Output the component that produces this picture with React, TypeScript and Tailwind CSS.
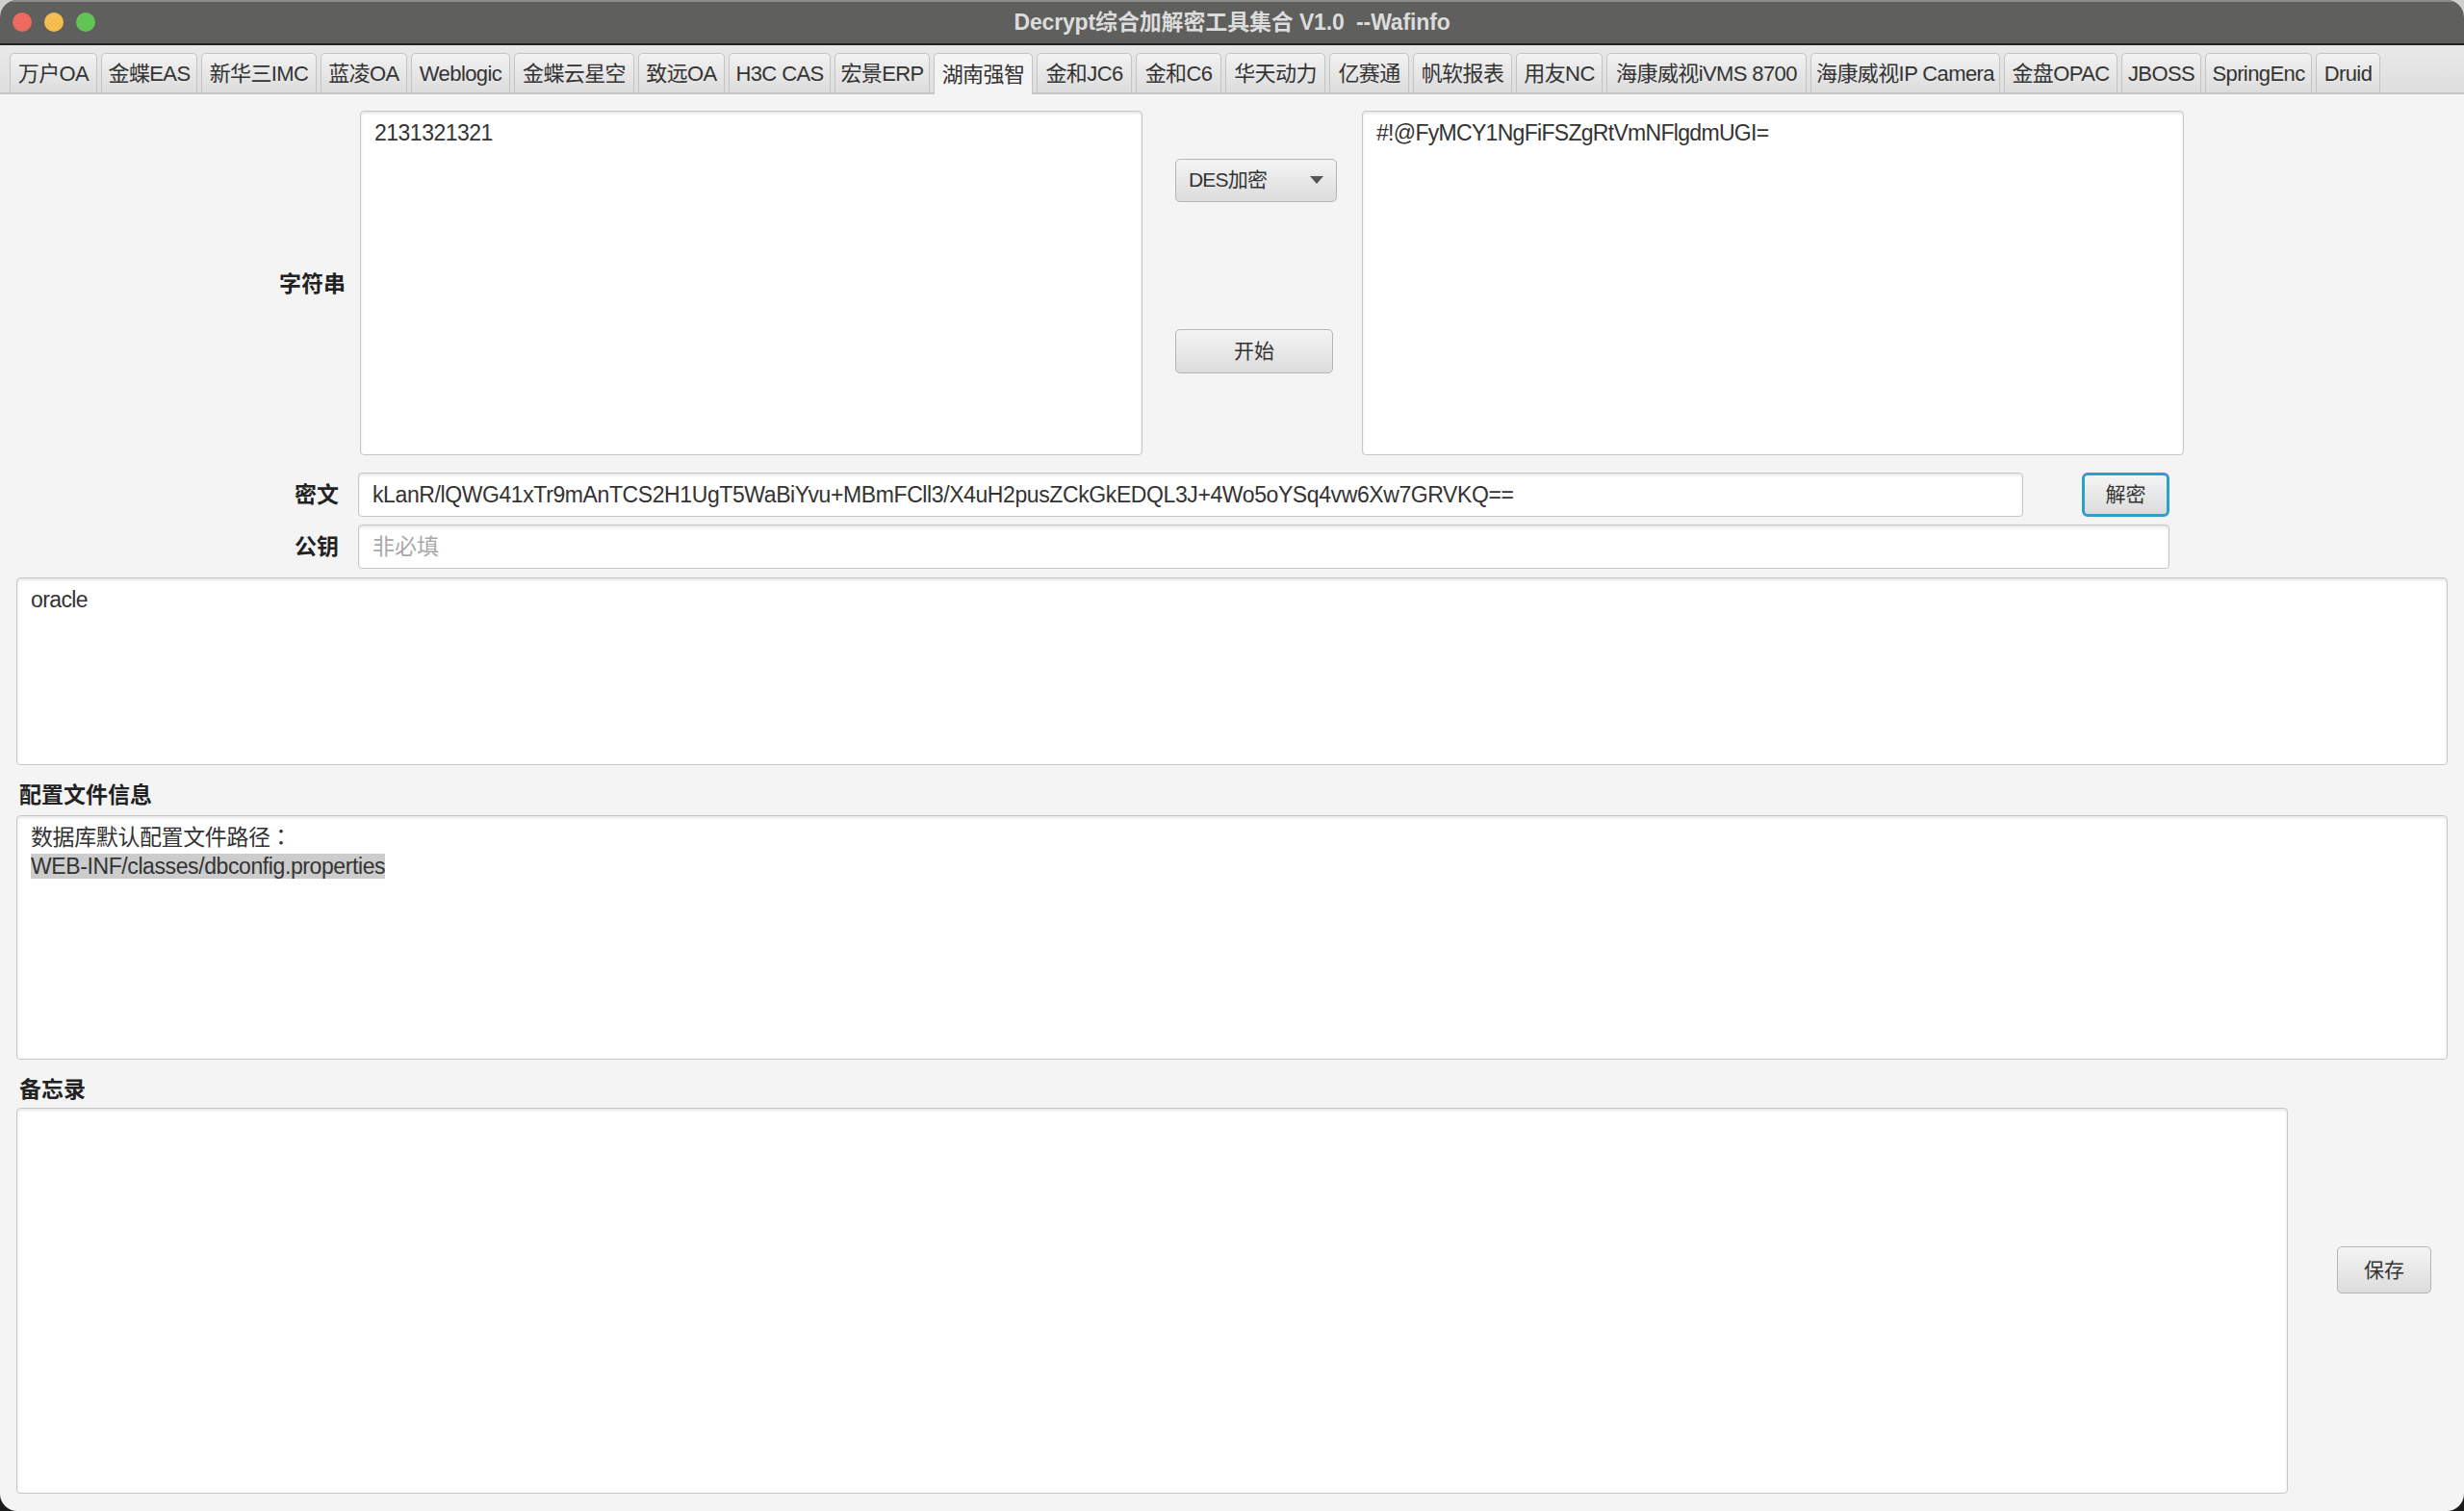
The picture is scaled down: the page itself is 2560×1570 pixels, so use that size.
const sans = "font-['Liberation_Sans','Noto_Sans_CJK_SC',sans-serif]";

const tabs = [
  { label: "万户OA", w: "w-[91px]" },
  { label: "金蝶EAS", w: "w-[100px]" },
  { label: "新华三IMC", w: "w-[120px]" },
  { label: "蓝凌OA", w: "w-[90px]" },
  { label: "Weblogic", w: "w-[103px]" },
  { label: "金蝶云星空", w: "w-[125px]" },
  { label: "致远OA", w: "w-[90px]" },
  { label: "H3C CAS", w: "w-[106px]" },
  { label: "宏景ERP", w: "w-[99px]" },
  { label: "湖南强智", w: "w-[103px]", active: true },
  { label: "金和JC6", w: "w-[99px]" },
  { label: "金和C6", w: "w-[89px]" },
  { label: "华天动力", w: "w-[104px]" },
  { label: "亿赛通", w: "w-[83px]" },
  { label: "帆软报表", w: "w-[103px]" },
  { label: "用友NC", w: "w-[90px]" },
  { label: "海康威视iVMS 8700", w: "w-[208px]" },
  { label: "海康威视IP Camera", w: "w-[197px]" },
  { label: "金盘OPAC", w: "w-[118px]" },
  { label: "JBOSS", w: "w-[83px]" },
  { label: "SpringEnc", w: "w-[111px]" },
  { label: "Druid", w: "w-[67px]" },
];

const field =
  "bg-white border border-[#c6c6c6] rounded-[4px] shadow-[inset_0_2px_3px_rgba(0,0,0,0.10)] text-[23px] leading-[30px] text-[#333333]";
const btn =
  "flex items-center rounded-[5px] bg-gradient-to-b from-[#f4f4f4] to-[#dcdcdc] text-[21px] text-[#333333]";
const label = "text-[23px] font-bold text-[#222222]";

export default function App() {
  return (
    <div className={`${sans} w-[2560px] h-[1570px] bg-gradient-to-b from-[#cfcfcf] from-50% to-[#1c1c1c] to-50% overflow-hidden`}>
      <div className="h-full rounded-[18px] bg-[#f4f4f4] overflow-hidden flex flex-col">
        {/* title bar */}
        <div className="relative h-[47px] shrink-0 bg-[#5f5f5d] border-t-2 border-[#8a8a88] border-b-2 border-b-[#222222] flex items-center justify-center">
          <div className="absolute left-[13px] top-[11px] flex gap-[13px]">
            <span className="w-[20px] h-[20px] rounded-full bg-[#ee6a5f]" />
            <span className="w-[20px] h-[20px] rounded-full bg-[#f5bd4f]" />
            <span className="w-[20px] h-[20px] rounded-full bg-[#61c454]" />
          </div>
          <span className="text-[23px] font-bold text-[#dcdcdc] whitespace-pre tracking-[-0.15px]">
            Decrypt综合加解密工具集合 V1.0  --Wafinfo
          </span>
        </div>

        {/* tab strip */}
        <div className="h-[51px] shrink-0 flex items-end gap-[4px] pl-[10px] bg-gradient-to-b from-[#e9e9e9] to-[#dedede] border-b-2 border-[#c4c4c4]">
          {tabs.map((t) => (
            <div
              key={t.label}
              className={
                t.active
                  ? `${t.w} h-[43px] -mb-[2px] flex items-center justify-center whitespace-nowrap rounded-t-[5px] border border-b-0 border-[#c4c4c4] bg-[#f4f4f4] text-[22px] text-[#333333] tracking-[-0.6px]`
                  : `${t.w} h-[41px] flex items-center justify-center whitespace-nowrap rounded-t-[5px] border border-b-0 border-[#c4c4c4] bg-gradient-to-b from-[#f2f2f2] to-[#dcdcdc] text-[22px] text-[#333333] tracking-[-0.6px]`
              }
            >
              {t.label}
            </div>
          ))}
        </div>

        <div className="flex-1 px-[17px] flex flex-col">
          {/* string row */}
          <div className="flex mt-[17px] h-[358px]">
            <div className={`${label} w-[342px] flex items-center justify-end pt-[2px]`}>字符串</div>
            <div className={`${field} w-[813px] ml-[15px] px-[14px] pt-[7px] tracking-[-0.5px]`}>2131321321</div>
            <div className="w-[168px] ml-[34px] flex flex-col items-start">
              <div className={`${btn} w-[168px] h-[45px] mt-[50px] justify-between pl-[13px] pr-[13px] pb-[2px] border border-[#b5b5b5]`}>
                <span className="tracking-[-0.8px]">DES加密</span>
                <span className="w-0 h-0 border-x-[7px] border-x-transparent border-t-[8px] border-t-[#555555]" />
              </div>
              <div className={`${btn} w-[164px] h-[46px] mt-[132px] justify-center border border-[#b5b5b5]`}>开始</div>
            </div>
            <div className={`${field} w-[854px] ml-[26px] px-[14px] pt-[7px] tracking-[-0.7px]`}>#!@FyMCY1NgFiFSZgRtVmNFlgdmUGI=</div>
          </div>

          {/* cipher row */}
          <div className="flex items-center mt-[18px] h-[46px]">
            <div className={`${label} w-[335px] text-right`}>密文</div>
            <div className={`${field} w-[1730px] h-[46px] ml-[20px] px-[14px] flex items-center whitespace-nowrap tracking-[-0.4px]`}>
              kLanR/lQWG41xTr9mAnTCS2H1UgT5WaBiYvu+MBmFCll3/X4uH2pusZCkGkEDQL3J+4Wo5oYSq4vw6Xw7GRVKQ==
            </div>
            <div className={`${btn} w-[91px] h-[46px] ml-[61px] justify-center border-[3px] border-[#2b9fd0] rounded-[6px]`}>解密</div>
          </div>

          {/* public key row */}
          <div className="flex items-center mt-[8px] h-[46px]">
            <div className={`${label} w-[335px] text-right`}>公钥</div>
            <div className={`${field} w-[1882px] h-[46px] ml-[20px] px-[14px] flex items-center text-[#a8a8a8]`}>非必填</div>
          </div>

          {/* result */}
          <div className={`${field} h-[195px] mt-[9px] px-[14px] pt-[7px] tracking-[-0.6px]`}>oracle</div>

          <div className={`${label} mt-[14px] h-[34px] pl-[3px] flex items-center`}>配置文件信息</div>
          <div className={`${field} h-[254px] mt-[4px] px-[14px] pt-[5px] tracking-[-0.4px]`}>
            <div>
              数据库默认配置文件路径<span className="font-['Noto_Sans_CJK_TC']">：</span>
            </div>
            <div>
              <span className="bg-[#cccccc]">WEB-INF/classes/dbconfig.properties</span>
            </div>
          </div>

          <div className={`${label} mt-[15px] h-[32px] pl-[3px] flex items-center`}>备忘录</div>
          <div className="flex mt-[3px]">
            <div className={`${field} w-[2360px] h-[401px]`} />
            <div className={`${btn} w-[98px] h-[49px] ml-[51px] mt-[144px] justify-center border border-[#b5b5b5]`}>保存</div>
          </div>
        </div>
      </div>
    </div>
  );
}
